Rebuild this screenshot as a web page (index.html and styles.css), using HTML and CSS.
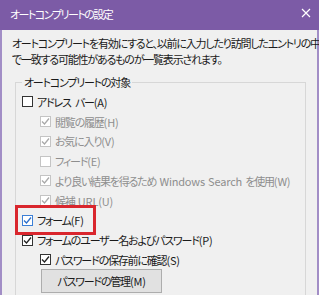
FILE: index.html
```html
<!DOCTYPE html>
<html>
  <head>
    <title>オートコンプリートの設定</title>
    <link rel="stylesheet" href="styles.css">
  </head>
  <body>
    <div class="window">
      <div class="titlebar">
        <span class="title">オートコンプリートの設定</span>
        <svg class="close" width="10" height="10" viewBox="0 0 10 10">
          <path d="M1 1 L9 9 M9 1 L1 9" stroke="#fff" stroke-width="1.2" fill="none"/>
        </svg>
      </div>
      <div class="content">
        <p class="desc">オートコンプリートを有効にすると、以前に入力したり訪問したエントリの中<br>で一致する可能性があるものが一覧表示されます。</p>
        <fieldset class="group">
          <legend>オートコンプリートの対象</legend>

          <div class="opt">
            <span class="box"></span>
            <span>アドレス バー<span class="en">(A)</span></span>
          </div>
          <div class="opt sub off">
            <span class="box checked"><svg viewBox="0 0 11 11"><path d="M2 5.5 L4.5 8 L9 2.5"/></svg></span>
            <span>閲覧の履歴<span class="en">(H)</span></span>
          </div>
          <div class="opt sub off">
            <span class="box checked"><svg viewBox="0 0 11 11"><path d="M2 5.5 L4.5 8 L9 2.5"/></svg></span>
            <span>お気に入り<span class="en">(V)</span></span>
          </div>
          <div class="opt sub off">
            <span class="box"></span>
            <span>フィード<span class="en">(E)</span></span>
          </div>
          <div class="opt sub off">
            <span class="box checked"><svg viewBox="0 0 11 11"><path d="M2 5.5 L4.5 8 L9 2.5"/></svg></span>
            <span>より良い結果を得るため<span class="en"> Windows Search </span>を使用<span class="en">(W)</span></span>
          </div>
          <div class="opt sub off">
            <span class="box checked"><svg viewBox="0 0 11 11"><path d="M2 5.5 L4.5 8 L9 2.5"/></svg></span>
            <span>候補<span class="en"> URL(U)</span></span>
          </div>
          <div class="opt">
            <span class="highlight">
              <span class="box checked focus"><svg viewBox="0 0 11 11"><path d="M2 5.5 L4.5 8 L9 2.5"/></svg></span>
              <span>フォーム<span class="en">(F)</span></span>
            </span>
          </div>
          <div class="opt">
            <span class="box checked"><svg viewBox="0 0 11 11"><path d="M2 5.5 L4.5 8 L9 2.5"/></svg></span>
            <span>フォームのユーザー名およびパスワード<span class="en">(P)</span></span>
          </div>
          <div class="opt sub">
            <span class="box checked"><svg viewBox="0 0 11 11"><path d="M2 5.5 L4.5 8 L9 2.5"/></svg></span>
            <span>パスワードの保存前に確認<span class="en">(S)</span></span>
          </div>
          <div class="buttons">
            <button class="btn" type="button">パスワードの管理<span class="en">(M)</span></button>
          </div>
        </fieldset>
      </div>
    </div>
  </body>
</html>
```

FILE: styles.css
```css
body {
  margin: 0;
  padding: 0;
  background-color: #ffffff;
  font-family: "Noto Sans CJK JP", "Noto Sans", sans-serif;
  font-feature-settings: "palt";
  font-size: 11px;
  letter-spacing: -1.2px;
  color: #1a1a1a;
}

.en {
  letter-spacing: -0.2px;
  word-spacing: 1px;
}

.window {
  width: 319px;
  height: 295px;
  display: flex;
  flex-direction: column;
  overflow: hidden;
}

.titlebar {
  height: 30px;
  flex-shrink: 0;
  background-color: #7c5ba6;
  color: #ffffff;
  display: flex;
  align-items: center;
  padding: 0 8px 0 10px;
}

.title {
  flex: 1;
  margin-top: -2px;
  letter-spacing: -1.5px;
}

.close {
  margin-top: -4px;
}

.content {
  flex: 1;
  background-color: #f0f0f0;
  border-left: 2px solid #a28ec6;
  border-right: 2px solid #a28ec6;
  padding: 5px 0 0 0;
}

.desc {
  margin: 0 0 7px 10px;
  line-height: 16px;
  white-space: nowrap;
}

.group {
  margin: 0 11px 0 13px;
  padding: 2px 0 0 6px;
  border: 1px solid #d7d7d7;
  height: 240px;
}

.group legend {
  padding: 0 2px;
  line-height: 16px;
}

.opt {
  height: 19.75px;
  display: flex;
  align-items: center;
  gap: 4px;
  white-space: nowrap;
  word-spacing: 3px;
}

.opt.sub {
  padding-left: 18px;
}

.opt.off {
  color: #8e8e8e;
}

.box {
  width: 9px;
  height: 9px;
  border: 1px solid #333333;
  background-color: #ffffff;
  display: inline-flex;
  flex-shrink: 0;
}

.box svg {
  width: 11px;
  height: 11px;
  margin: -1px;
  fill: none;
  stroke: #222222;
  stroke-width: 1.3;
}

.off .box {
  border-color: #c4c4c4;
}

.off .box svg {
  stroke: #a9a9a9;
}

.box.focus {
  border-color: #3c7fd6;
}

.box.focus svg {
  stroke: #2c6fcb;
}

.highlight {
  display: inline-flex;
  align-items: center;
  gap: 4px;
  outline: 3px solid #d9262d;
  outline-offset: 4px;
  padding-right: 5px;
}

.buttons {
  margin-top: -1px;
  padding-left: 19px;
}

.btn {
  width: 121px;
  height: 24px;
  background-color: #e1e1e1;
  border: 1px solid #adadad;
  font-family: "Noto Sans CJK JP", "Noto Sans", sans-serif;
  font-feature-settings: "palt";
  font-size: 11px;
  letter-spacing: -1.2px;
  color: #1a1a1a;
  padding: 0;
}
```
